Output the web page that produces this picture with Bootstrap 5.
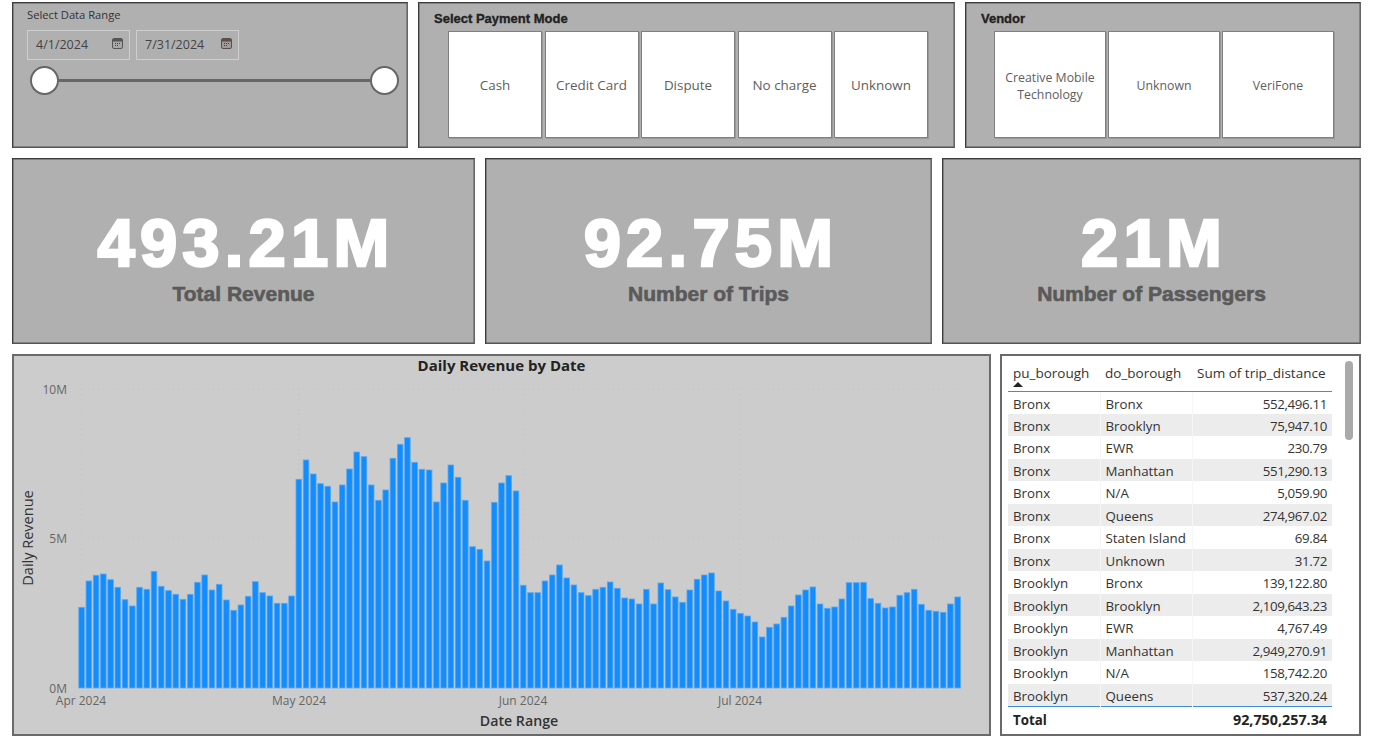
<!DOCTYPE html>
<html lang="en">
<head>
<meta charset="UTF-8">
<title>Taxi Revenue Dashboard</title>
<link href="https://cdn.jsdelivr.net/npm/bootstrap@5.3.0/dist/css/bootstrap.min.css" rel="stylesheet">
<style>
  html, body { background: #fff; height: 100%; overflow: hidden; }
  body { font-family: "Open Sans", "Noto Sans", sans-serif; color: #333; padding: 2px 12px 0; }
  .dash-row { gap: 10px; }
  .grey-panel { background: #b0b0b0; border: 1px solid #3c3c3c; border-right-color: #666; border-bottom-color: #555; box-shadow: inset 0 0 0 .5px #555; }
  .top-row { height: 146px; margin-bottom: 10px; }
  .w-range { width: 396px; padding: 5px 8px 0 14px; }
  .w-pay { width: 537px; }
  .w-vendor { width: 396px; }
  .range-title { font-size: 11.2px; line-height: 13px; color: #333; margin-bottom: 9px; }
  .date-row { gap: 6px; }
  .date-box { width: 103px; height: 30px; border: 1px solid #cfcfcf; padding: 1px 6px 0 8px; font-size: 12.5px; color: #444; }
  .date-box svg { margin-top: -4px; }
  .range-slider { margin: 6px 0 0 2.5px; }
  .slide-knob { width: 29px; height: 29px; border-radius: 50%; background: #fff; border: 2px solid #666; flex: none; }
  .slide-line { height: 3px; background: #666; flex: 1; }
  .slicer-title { font-family: "Liberation Sans", Arial, sans-serif; font-weight: 700; font-size: 13px; line-height: 16px; color: #222; -webkit-text-stroke: .35px #222; padding: 8px 0 4px 15px; }
  .slicer-btns { padding-left: 29px; gap: 2.5px; }
  .vendor-btns { padding-left: 28px; gap: 2px; }
  .slicer-btn { height: 107px; background: #fff; border: 1px solid #808080; box-shadow: 1px 1px 0 #999; color: #605e5c; line-height: 17px; text-align: center; padding-top: 2px; }
  .pay-btn { width: 94px; font-size: 13.4px; }
  .vendor-btn { width: 112px; padding-left: 8px; padding-right: 8px; font-size: 12.3px; }
  .kpi-row { height: 186px; margin-bottom: 10px; }
  .w-rev { width: 463px; }
  .w-trips { width: 447px; }
  .w-pass { width: 419px; }
  .kpi-num { font-family: "Liberation Sans", Arial, sans-serif; font-weight: 700; font-size: 67px; line-height: 70px; color: #fff; -webkit-text-stroke: 2.5px #fff; letter-spacing: 5.2px; margin: 12px 0 0 5px; }
  .kpi-label { font-family: "Liberation Sans", Arial, sans-serif; font-weight: 700; font-size: 21px; line-height: 24px; color: #5a5a5a; -webkit-text-stroke: .6px #5a5a5a; margin-top: 4px; }
  .bottom-row { height: 382px; gap: 9px; }
  .chart-panel { width: 979px; background: #ccc; border: 2px solid #6a6a6a; }
  .chart-title { font-family: "Open Sans", sans-serif; font-weight: 700; font-size: 15px; line-height: 18px; height: 22px; color: #222; text-align: center; }
  .chart-panel svg text { font-family: "Open Sans", sans-serif; }
  .grid-panel { width: 361px; background: #fff; border: 2px solid #6a6a6a; padding: 6px 0 0 6px; }
  .grid-scroll { width: 8px; height: 79px; background: #aaa; border-radius: 4px; margin-left: 13px; margin-top: -1px; flex: none; }
  .trip-table { width: 324px; table-layout: fixed; margin: 0; font-size: 13.3px; --bs-table-bg: transparent; --bs-table-color: #333; }
  .trip-table th, .trip-table td { padding: 2px 5px 0; border: 0; vertical-align: middle; white-space: nowrap; height: 22.5px; line-height: 16px; }
  .trip-table thead th { font-weight: 400; font-size: 13.5px; height: 29px; vertical-align: top; border-bottom: 1px solid #3d8fd4; padding-top: 3px; }
  .trip-table thead th.text-end { padding-right: 7px; }
  .trip-table tbody tr:nth-child(even) td { background: #ececec; }
  .trip-table tbody td + td { border-left: 1px solid #f6f6f6; }
  .trip-table tbody td.text-end { letter-spacing: -.35px; }
  .trip-table tfoot td { font-weight: 700; color: #222; border-top: 1px solid #3d8fd4; height: 27px; padding-top: 1px; }
  .trip-table tfoot td.text-end { font-size: 14.3px; }
  .sort-mark { display: block; width: 0; height: 0; border-left: 5px solid transparent; border-right: 5px solid transparent; border-bottom: 5px solid #222; margin-top: 1px; }
</style>
</head>
<body>

  <!-- slicers -->
  <div class="d-flex dash-row top-row">
    <div class="grey-panel w-range">
      <div class="range-title">Select Data Range</div>
      <div class="d-flex date-row">
        <div class="date-box d-flex align-items-center justify-content-between">4/1/2024
          <svg width="11" height="11" viewBox="0 0 11 11"><rect x=".5" y=".5" width="10" height="10" rx="1.5" fill="#a8a8a8" stroke="#555"/><rect x="1" y="1" width="9" height="2.5" fill="#555"/><path d="M3 5.5h1M5 5.5h1M7 5.5h1M3 7.5h1M5 7.5h1" stroke="#444"/></svg>
        </div>
        <div class="date-box d-flex align-items-center justify-content-between">7/31/2024
          <svg width="11" height="11" viewBox="0 0 11 11"><rect x=".5" y=".5" width="10" height="10" rx="1.5" fill="#a09a98" stroke="#5c4f4a"/><rect x="1" y="1" width="9" height="2.5" fill="#5c4f4a"/><path d="M3 5.5h1M5 5.5h1M7 5.5h1M3 7.5h1M5 7.5h1" stroke="#444"/></svg>
        </div>
      </div>
      <div class="range-slider d-flex align-items-center">
        <div class="slide-knob"></div>
        <div class="slide-line"></div>
        <div class="slide-knob"></div>
      </div>
    </div>

    <div class="grey-panel w-pay">
      <div class="slicer-title">Select Payment Mode</div>
      <div class="slicer-btns d-flex">
        <div class="slicer-btn pay-btn d-flex align-items-center justify-content-center">Cash</div>
        <div class="slicer-btn pay-btn d-flex align-items-center justify-content-center">Credit Card</div>
        <div class="slicer-btn pay-btn d-flex align-items-center justify-content-center">Dispute</div>
        <div class="slicer-btn pay-btn d-flex align-items-center justify-content-center">No charge</div>
        <div class="slicer-btn pay-btn d-flex align-items-center justify-content-center">Unknown</div>
      </div>
    </div>

    <div class="grey-panel w-vendor">
      <div class="slicer-title">Vendor</div>
      <div class="vendor-btns d-flex">
        <div class="slicer-btn vendor-btn d-flex align-items-center justify-content-center">Creative Mobile Technology</div>
        <div class="slicer-btn vendor-btn d-flex align-items-center justify-content-center">Unknown</div>
        <div class="slicer-btn vendor-btn d-flex align-items-center justify-content-center">VeriFone</div>
      </div>
    </div>
  </div>

  <!-- kpi cards -->
  <div class="d-flex dash-row kpi-row">
    <div class="grey-panel w-rev d-flex flex-column align-items-center justify-content-center">
      <div class="kpi-num">493.21M</div>
      <div class="kpi-label">Total Revenue</div>
    </div>
    <div class="grey-panel w-trips d-flex flex-column align-items-center justify-content-center">
      <div class="kpi-num">92.75M</div>
      <div class="kpi-label">Number of Trips</div>
    </div>
    <div class="grey-panel w-pass d-flex flex-column align-items-center justify-content-center">
      <div class="kpi-num">21M</div>
      <div class="kpi-label">Number of Passengers</div>
    </div>
  </div>

  <!-- chart and table -->
  <div class="d-flex bottom-row">
    <div class="chart-panel">
      <div class="chart-title">Daily Revenue by Date</div>
      <svg id="revChart" class="d-block" width="975" height="356" viewBox="14 378 975 356"></svg>
    </div>
    <div class="grid-panel d-flex align-items-start">
      <div>
        <table class="table trip-table">
          <colgroup><col style="width:92px"><col style="width:92px"><col style="width:140px"></colgroup>
          <thead>
            <tr><th>pu_borough<span class="sort-mark"></span></th><th>do_borough</th><th class="text-end">Sum of trip_distance</th></tr>
          </thead>
          <tbody id="tripRows"></tbody>
          <tfoot>
            <tr><td>Total</td><td></td><td class="text-end">92,750,257.34</td></tr>
          </tfoot>
        </table>
      </div>
      <div class="grid-scroll"></div>
    </div>
  </div>

<script src="https://cdn.jsdelivr.net/npm/bootstrap@5.3.0/dist/js/bootstrap.bundle.min.js"></script>
<script>
  // bar tops in page pixels, read off the screenshot, one per day Apr 1 - Jul 31
  const tops = [
    607.3,581,575.3,574,579.7,587.3,599.7,606,587.3,589.3,571.3,586.3,590.7,594.3,599.3,594.3,582.3,575,590,584.3,600,610.3,605,596.3,581.7,592.7,596,603.3,603.3,596,
    479.3,460,474,483.7,486.3,502,485,469,452,456.7,485,500.3,490,458.3,444.3,437.7,462.3,469.3,470,502,483,465,477.3,500.3,546.7,549.3,561,502.3,483,475.7,491,
    585.3,592.7,592.7,581,575,565,578,585,592.7,595.7,589.3,587.3,582,588.3,598,599,604,589.3,604,583,589.7,597,602.3,590,579.3,575,573,591,601,609.3,
    613.3,616,622,637,627.3,624,617.3,606,595,590,587,604,608.3,607,599,582.7,582.7,582.3,598.7,603.3,608,607,595.3,592.7,589.3,604.3,610.3,611.3,612.3,604,597
  ];
  const base = 688, startX = 78.4, pitch = 7.24;
  const chart = document.getElementById('revChart');
  let svg = '';
  // faint dotted grid
  [389, 538].forEach(y => { svg += `<line x1="78" x2="961" y1="${y}" y2="${y}" stroke="#c2c2c2" stroke-dasharray="1 4"/>`; });
  [0, 30, 61, 91].forEach(i => {
    const x = startX + i * pitch + 3;
    svg += `<line x1="${x}" x2="${x}" y1="389" y2="688" stroke="#c2c2c2" stroke-dasharray="1 4"/>`;
  });
  tops.forEach((t, i) => {
    svg += `<rect x="${(startX + i * pitch + .4).toFixed(2)}" y="${t}" width="5.6" height="${(base - t).toFixed(1)}" fill="#118dff" stroke="#5fa8ec" stroke-width=".8"/>`;
  });
  [['10M', 389], ['5M', 538], ['0M', 688]].forEach(([l, y]) => {
    svg += `<text x="67" y="${y + 5}" text-anchor="end" font-size="12" fill="#666">${l}</text>`;
  });
  [['Apr 2024', 81], ['May 2024', 299], ['Jun 2024', 523], ['Jul 2024', 740]].forEach(([l, x]) => {
    svg += `<text x="${x}" y="705" text-anchor="middle" font-size="12" fill="#666">${l}</text>`;
  });
  svg += `<text x="519" y="726" text-anchor="middle" font-size="14.2" font-weight="600" fill="#333">Date Range</text>`;
  svg += `<text transform="translate(33 538) rotate(-90)" text-anchor="middle" font-size="14.5" fill="#333">Daily Revenue</text>`;
  chart.innerHTML = svg;

  const rows = [
    ['Bronx','Bronx','552,496.11'],['Bronx','Brooklyn','75,947.10'],['Bronx','EWR','230.79'],['Bronx','Manhattan','551,290.13'],
    ['Bronx','N/A','5,059.90'],['Bronx','Queens','274,967.02'],['Bronx','Staten Island','69.84'],['Bronx','Unknown','31.72'],
    ['Brooklyn','Bronx','139,122.80'],['Brooklyn','Brooklyn','2,109,643.23'],['Brooklyn','EWR','4,767.49'],['Brooklyn','Manhattan','2,949,270.91'],
    ['Brooklyn','N/A','158,742.20'],['Brooklyn','Queens','537,320.24']
  ];
  document.getElementById('tripRows').innerHTML = rows.map(r =>
    `<tr><td>${r[0]}</td><td>${r[1]}</td><td class="text-end">${r[2]}</td></tr>`).join('');
</script>
</body>
</html>
